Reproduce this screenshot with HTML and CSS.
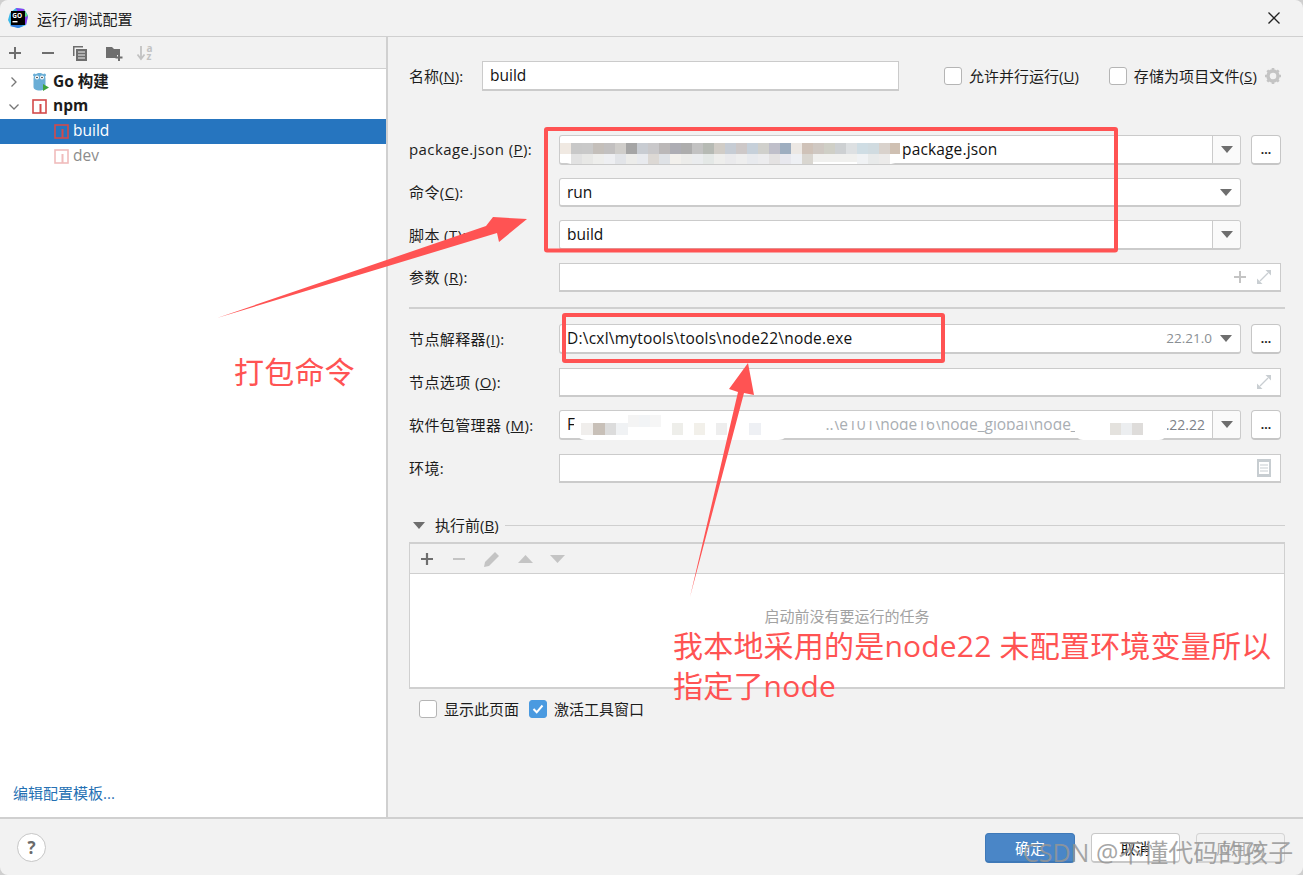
FILE: index.html
```html
<!DOCTYPE html>
<html lang="zh">
<head>
<meta charset="utf-8">
<title>运行/调试配置</title>
<link rel="stylesheet" href="styles.css">
</head>
<body>
<div class="window">
  <header class="titlebar">
    <svg class="app-logo" width="22" height="22" viewBox="0 0 22 22">
      <path d="M3 6 9 1l8 1 4 7-2 9-7 3-8-2-3-6z" fill="#3bb8e8"/>
      <path d="M9 1l8 1 4 7-2 9-5-6z" fill="#8a3ff0"/>
      <path d="M17 2l4 7-3 1z" fill="#5fe08a"/>
      <path d="M3 19l8 2 5-2-6-4z" fill="#2f7de0"/>
      <rect x="4" y="4" width="14" height="14" fill="#000"/>
      <text x="5.2" y="10.5" class="logo-text">GO</text>
      <rect x="5.5" y="14" width="5" height="1.4" fill="#fff"/>
    </svg>
    <span class="title-text">运行/调试配置</span>
    <svg class="close-icon" width="14" height="14" viewBox="0 0 14 14"><path d="M1.5 1.5l11 11M12.5 1.5l-11 11" stroke="#222" stroke-width="1.3" fill="none"/></svg>
  </header>
  <div class="main">
    <aside class="sidebar">
      <div class="side-toolbar">
        <svg width="14" height="14" viewBox="0 0 14 14" class="tool-plus"><path d="M7 1v12M1 7h12" stroke="#6e6e6e" stroke-width="2"/></svg>
        <svg width="14" height="14" viewBox="0 0 14 14" class="tool-minus"><path d="M1 7h12" stroke="#6e6e6e" stroke-width="2"/></svg>
        <svg width="16" height="16" viewBox="0 0 16 16" class="tool-copy"><path d="M1 11V1h10v1.500H2.500V11z" fill="#6e6e6e"/><rect x="4" y="4" width="11" height="12" fill="#6e6e6e"/><path d="M6 7h7M6 10h7M6 13h7" stroke="#f2f2f2" stroke-width="1.200"/></svg>
        <svg width="18" height="16" viewBox="0 0 18 16" class="tool-folder"><path d="M1 2h6l2 2h6v6h-3v3H1z" fill="#6e6e6e"/><path d="M14 9v7M10.500 12.500h7" stroke="#6e6e6e" stroke-width="2"/></svg>
        <svg width="20" height="25" viewBox="0 -4 20 25" class="tool-sort"><path d="M5 2v12M1.500 10.500 5 15l3.500-4.500" stroke="#c2c2c2" stroke-width="1.800" fill="none"/><text x="10.500" y="7.500" class="sort-text">a</text><text x="10.500" y="16" class="sort-text">z</text></svg>
      </div>
      <div class="tree">
        <div class="tree-row">
          <svg class="chev" width="10" height="12" viewBox="0 0 10 12"><path d="M2.500 1.500 7 6l-4.500 4.500" stroke="#777" stroke-width="1.300" fill="none"/></svg>
          <svg class="node-icon" width="17" height="20" viewBox="0 0 17 20">
            <circle cx="2.500" cy="3" r="1.500" fill="#6aaed6"/><circle cx="12.500" cy="3" r="1.500" fill="#6aaed6"/>
            <path d="M1.500 7c0-3.500 2.500-6 6-6s6 2.500 6 6v8c0 2-2.500 3.500-6 3.500s-6-1.500-6-3.500z" fill="#6aaed6"/>
            <circle cx="5" cy="5.500" r="2" fill="#fff"/><circle cx="10" cy="5.500" r="2" fill="#fff"/>
            <circle cx="5" cy="5.500" r=".8" fill="#222"/><circle cx="10" cy="5.500" r=".8" fill="#222"/>
            <path d="M11 12l6 3.500-6 3.500z" fill="#3fa33f"/>
          </svg>
          <span class="bold">Go 构建</span>
        </div>
        <div class="tree-row">
          <svg class="chev" width="12" height="10" viewBox="0 0 12 10"><path d="M1.500 2.500 6 7l4.500-4.500" stroke="#777" stroke-width="1.300" fill="none"/></svg>
          <svg class="node-icon npm" width="15" height="15" viewBox="0 0 15 15"><rect x="1" y="1" width="13" height="13" fill="#fff" stroke="#d44a4a" stroke-width="1.600"/><rect x="7.500" y="5" width="2" height="9" fill="#d44a4a"/></svg>
          <span class="bold">npm</span>
        </div>
        <div class="tree-row leaf selected">
          <svg class="node-icon npm" width="15" height="15" viewBox="0 0 15 15"><rect x="1" y="1" width="13" height="13" fill="none" stroke="#d44a4a" stroke-width="1.600"/><rect x="7.500" y="5" width="2" height="9" fill="#d44a4a"/></svg>
          <span>build</span>
        </div>
        <div class="tree-row leaf muted">
          <svg class="node-icon npm" width="15" height="15" viewBox="0 0 15 15"><rect x="1" y="1" width="13" height="13" fill="#fff" stroke="#f0bcbc" stroke-width="1.600"/><rect x="7.500" y="5" width="2" height="9" fill="#f0bcbc"/></svg>
          <span>dev</span>
        </div>
        <a class="edit-link">编辑配置模板...</a>
      </div>
    </aside>
    <section class="content">
      <div class="name-row">
        <label class="name-label">名称(<u>N</u>):</label>
        <div class="field name-field">build</div>
        <span class="check first-check"></span><span class="check-label">允许并行运行(<u>U</u>)</span>
        <span class="check second-check"></span><span class="check-label wide-label">存储为项目文件(<u>S</u>)</span>
        <svg class="gear" width="18" height="18" viewBox="0 0 18 18"><circle cx="9" cy="9" r="5" fill="none" stroke="#c4c4c4" stroke-width="3.400"/><path d="M9 1v3M9 14v3M1 9h3M14 9h3M3.300 3.300l2.200 2.200M12.500 12.500l2.200 2.200M14.700 3.300l-2.200 2.200M5.500 12.500l-2.200 2.200" stroke="#c4c4c4" stroke-width="2.600"/></svg>
      </div>

      <div class="form-group">
        <div class="row h30">
          <label class="row-label">package.json (<u>P</u>):</label>
          <div class="field round combo"><span class="value pkg-value">package.json</span><span class="drop sep"><i class="tri"></i></span></div>
          <button class="more">...</button>
        </div>
        <div class="row h29">
          <label class="row-label">命令(<u>C</u>):</label>
          <div class="field round combo"><span class="value">run</span><span class="drop"><i class="tri"></i></span></div>
        </div>
        <div class="row h30">
          <label class="row-label">脚本 (<u>T</u>):</label>
          <div class="field round combo"><span class="value">build</span><span class="drop sep"><i class="tri"></i></span></div>
        </div>
        <div class="row h29">
          <label class="row-label">参数 (<u>R</u>):</label>
          <div class="field wide"><span class="value"></span>
            <svg class="field-plus" width="14" height="14" viewBox="0 0 14 14"><path d="M7 1v12M1 7h12" stroke="#c4c4c4" stroke-width="2"/></svg>
            <svg class="expand" width="16" height="16" viewBox="0 0 16 16"><path d="M9.500 1H15v5.500zM6.500 15H1V9.500z" fill="#c9ced2"/><path d="M12 4 4 12" stroke="#c9ced2" stroke-width="1.200"/></svg>
          </div>
        </div>
      </div>

      <div class="divider"></div>

      <div class="form-group">
        <div class="row h30 extra-gap">
          <label class="row-label">节点解释器(<u>I</u>):</label>
          <div class="field round combo"><span class="value node-path">D:\cxl\mytools\tools\node22\node.exe</span><span class="version">22.21.0</span><span class="drop"><i class="tri"></i></span></div>
          <button class="more">...</button>
        </div>
        <div class="row h29">
          <label class="row-label">节点选项 (<u>O</u>):</label>
          <div class="field wide"><span class="value"></span>
            <svg class="expand" width="16" height="16" viewBox="0 0 16 16"><path d="M9.500 1H15v5.500zM6.500 15H1V9.500z" fill="#c9ced2"/><path d="M12 4 4 12" stroke="#c9ced2" stroke-width="1.200"/></svg>
          </div>
        </div>
        <div class="row h30 extra-gap">
          <label class="row-label">软件包管理器 (<u>M</u>):</label>
          <div class="field round combo"><span class="value">F</span><span class="faint-path">..\e101\node16\node_global\node_</span><span class="version dark">.22.22</span><span class="drop sep"><i class="tri"></i></span></div>
          <button class="more">...</button>
        </div>
        <div class="row h29">
          <label class="row-label">环境:</label>
          <div class="field wide"><span class="value"></span>
            <svg class="doc" width="14" height="18" viewBox="0 0 14 18"><rect width="14" height="18" fill="#c7cdd1"/><rect x="2" y="3" width="10" height="12" fill="#fff"/><path d="M3 6h8M3 9h8M3 12h8" stroke="#c7cdd1" stroke-width="1.200"/></svg>
          </div>
        </div>
      </div>

      <div class="before-head">
        <i class="tri before-tri"></i>
        <span class="before-title">执行前(<u>B</u>)</span>
        <span class="before-line"></span>
      </div>
      <div class="before-box">
        <div class="before-tools">
          <svg width="14" height="14" viewBox="0 0 14 14"><path d="M7 1v12M1 7h12" stroke="#6e6e6e" stroke-width="2.200"/></svg>
          <svg width="14" height="14" viewBox="0 0 14 14"><path d="M1 7h12" stroke="#c4c4c4" stroke-width="2"/></svg>
          <svg width="18" height="18" viewBox="0 0 18 18"><path d="M1 17l1-5L12 2l4 4L6 16z" fill="#c4c4c4"/></svg>
          <svg width="15" height="8" viewBox="0 0 15 8"><path d="M0 8 7.500 0 15 8z" fill="#c4c4c4"/></svg>
          <svg width="15" height="8" viewBox="0 0 15 8"><path d="M0 0l7.500 8L15 0z" fill="#c4c4c4"/></svg>
        </div>
        <div class="before-empty">启动前没有要运行的任务</div>
      </div>
      <div class="bottom-checks">
        <span class="check"></span><span class="check-label">显示此页面</span>
        <span class="check checked"><svg width="18" height="18" viewBox="0 0 18 18"><path d="M4.500 9l3.200 3.300L13.500 5.500" stroke="#fff" stroke-width="2" fill="none"/></svg></span><span class="check-label">激活工具窗口</span>
      </div>
    </section>
  </div>
  <footer class="footer">
    <span class="help">?</span>
    <div class="actions">
      <button class="btn primary">确定</button>
      <button class="btn">取消</button>
      <button class="btn disabled">应用(A)</button>
    </div>
  </footer>

  <svg class="annotations" width="1303" height="875" viewBox="0 0 1303 875">
    <g>
      <rect x="561" y="136" width="340" height="28" rx="10" fill="#fff"/>
      <rect x="574" y="411" width="216" height="29" rx="12" fill="#fff"/>
      <rect x="780" y="411" width="390" height="10" fill="#fff"/>
      <rect x="1075" y="411" width="92" height="29" rx="8" fill="#fff"/>
    </g>
    <g>
      <rect x="560" y="143" width="11" height="11" fill="#f0e9e2"/><rect x="571" y="143" width="11" height="11" fill="#c8c8c8"/><rect x="582" y="143" width="11" height="11" fill="#c9c9c9"/><rect x="593" y="143" width="11" height="11" fill="#c4bfba"/><rect x="604" y="143" width="11" height="11" fill="#c2c0c0"/><rect x="615" y="143" width="11" height="11" fill="#cfcdca"/><rect x="626" y="143" width="11" height="11" fill="#a5a5a5"/><rect x="637" y="143" width="11" height="11" fill="#c8ccd2"/><rect x="648" y="143" width="11" height="11" fill="#c9c8ca"/><rect x="659" y="143" width="11" height="11" fill="#bbb8b8"/><rect x="670" y="143" width="11" height="11" fill="#adadb4"/><rect x="681" y="143" width="11" height="11" fill="#adadad"/><rect x="692" y="143" width="11" height="11" fill="#c2c2c2"/><rect x="703" y="143" width="11" height="11" fill="#b6bab4"/><rect x="714" y="143" width="11" height="11" fill="#d0ccc6"/><rect x="725" y="143" width="11" height="11" fill="#c6ccd4"/><rect x="736" y="143" width="11" height="11" fill="#cdc8c8"/><rect x="747" y="143" width="11" height="11" fill="#c6d0da"/><rect x="758" y="143" width="11" height="11" fill="#d0d0cc"/><rect x="769" y="143" width="11" height="11" fill="#bfbfca"/><rect x="780" y="143" width="11" height="11" fill="#9eaec0"/><rect x="791" y="143" width="11" height="11" fill="#ece8e4"/><rect x="802" y="143" width="11" height="11" fill="#cfc2b8"/><rect x="813" y="143" width="11" height="11" fill="#cfc8c2"/><rect x="824" y="143" width="11" height="11" fill="#cfcfc6"/><rect x="835" y="143" width="11" height="11" fill="#cdd0d2"/><rect x="846" y="143" width="11" height="11" fill="#dde0e2"/><rect x="857" y="143" width="11" height="11" fill="#cfdde4"/><rect x="868" y="143" width="11" height="11" fill="#d0dbe0"/><rect x="879" y="143" width="11" height="11" fill="#d9d2cc"/><rect x="890" y="143" width="10" height="11" fill="#cfc0b2"/>
      <rect x="571" y="154" width="11" height="10" fill="#e2e2e2"/><rect x="582" y="154" width="11" height="10" fill="#e8e8e6"/><rect x="593" y="154" width="11" height="10" fill="#eeeeec"/><rect x="604" y="154" width="11" height="10" fill="#eeeff2"/><rect x="615" y="154" width="11" height="10" fill="#e2e4e8"/><rect x="626" y="154" width="11" height="10" fill="#ececea"/><rect x="637" y="154" width="11" height="10" fill="#e8eaee"/><rect x="648" y="154" width="11" height="10" fill="#dcd8d4"/><rect x="659" y="154" width="11" height="10" fill="#dfe2e6"/><rect x="670" y="154" width="11" height="10" fill="#f2f0ec"/><rect x="681" y="154" width="11" height="10" fill="#ececea"/><rect x="692" y="154" width="11" height="10" fill="#eaecee"/><rect x="703" y="154" width="11" height="10" fill="#e4e8e6"/><rect x="714" y="154" width="11" height="10" fill="#eeeeec"/><rect x="725" y="154" width="11" height="10" fill="#eaeaec"/><rect x="736" y="154" width="11" height="10" fill="#eeeeee"/><rect x="747" y="154" width="11" height="10" fill="#e8eaee"/><rect x="758" y="154" width="11" height="10" fill="#ececee"/><rect x="769" y="154" width="11" height="10" fill="#e4e2e2"/><rect x="780" y="154" width="11" height="10" fill="#e8e8ee"/><rect x="791" y="154" width="11" height="10" fill="#eef0f4"/><rect x="802" y="154" width="11" height="10" fill="#d9d6d0"/><rect x="813" y="154" width="44" height="8" fill="#f0f0ee"/><rect x="857" y="154" width="11" height="10" fill="#f0f2f4"/><rect x="868" y="154" width="11" height="10" fill="#e8eaea"/><rect x="879" y="154" width="11" height="10" fill="#ecebea"/>
    </g>
    <g>
      <rect x="581" y="423" width="12" height="12" fill="#f0eeec"/><rect x="593" y="423" width="12" height="12" fill="#c8c0b8"/><rect x="605" y="423" width="11" height="12" fill="#dcdcdc"/><rect x="616" y="423" width="12" height="12" fill="#f0f2f4"/><rect x="628" y="415" width="11" height="12" fill="#f4f4f4"/><rect x="639" y="415" width="11" height="12" fill="#f2f4f6"/><rect x="650" y="415" width="11" height="12" fill="#f6f6f6"/><rect x="672" y="423" width="11" height="12" fill="#eeeeea"/><rect x="694" y="423" width="11" height="12" fill="#f2f0ea"/><rect x="716" y="423" width="11" height="12" fill="#eeeeee"/><rect x="749" y="423" width="12" height="12" fill="#eef0f4"/><rect x="1110" y="423" width="11" height="12" fill="#e4e2de"/><rect x="1121" y="423" width="11" height="12" fill="#eceef0"/><rect x="1132" y="423" width="11" height="12" fill="#dedcda"/>
    </g>
    <rect class="callout" x="546" y="129" width="570" height="121.500" rx="1"/>
    <rect class="callout" x="564" y="315" width="379" height="46" rx="1"/>
    <polygon class="arrow" points="217,318 486,226 493,217 527,219 499,242 497,233"/>
    <polygon class="arrow" points="690,597 738,392 729,389 748,363 754,395 744,393"/>
  </svg>
  <div class="note note-pack">打包命令</div>
  <div class="note note-node">我本地采用的是node22 未配置环境变量所以<br>指定了node</div>
  <div class="watermark">CSDN @不懂代码的孩子</div>
</div>
</body>
</html>
```
FILE: styles.css
```css
* { box-sizing: border-box; }
html, body { margin: 0; padding: 0; }
body {
  width: 1303px;
  height: 875px;
  overflow: hidden;
  background: #cfcfcf;
  font-family: "Open Sans", "Noto Sans CJK SC", sans-serif;
  font-size: 15px;
  color: #1c1c1c;
}
.window {
  position: relative;
  width: 1303px;
  height: 875px;
  display: flex;
  flex-direction: column;
  background: #f2f2f2;
  border-radius: 8px;
}
.titlebar {
  height: 37px;
  flex: none;
  display: flex;
  align-items: center;
  padding: 0 22px 0 7px;
  border-bottom: 1px solid #d0d0d0;
}
.app-logo { flex: none; }
.logo-text { font: 700 6.500px "Open Sans", sans-serif; fill: #fff; }
.title-text { margin-left: 8px; font-size: 15px; }
.close-icon { margin-left: auto; }
.main { flex: 1; display: flex; min-height: 0; }
.sidebar {
  width: 388px;
  flex: none;
  display: flex;
  flex-direction: column;
  border-right: 2px solid #d0d0d0;
}
.side-toolbar {
  height: 32px;
  flex: none;
  display: flex;
  align-items: center;
  padding-left: 8px;
  border-bottom: 1px solid #d0d0d0;
}
.tool-minus { margin-left: 19px; }
.tool-copy { margin-left: 17px; }
.tool-folder { margin-left: 17px; }
.tool-sort { margin-left: 13px; }
.sort-text { font: 700 10px "Open Sans", sans-serif; fill: #c2c2c2; }
.tree {
  flex: 1;
  background: #fff;
  display: flex;
  flex-direction: column;
  position: relative;
}
.tree-row {
  height: 25px;
  flex: none;
  display: flex;
  align-items: center;
  padding-left: 8px;
  font-size: 15.500px;
}
.chev { width: 12px; flex: none; }
.node-icon { margin-left: 12px; flex: none; }
.node-icon.npm { margin-left: 12px; margin-right: 2px; }
.tree-row > span { margin-left: 4px; padding-bottom: 3px; }
.bold { font-weight: 700; }
.leaf { padding-left: 43px; }
.leaf .node-icon.npm { margin-left: 11px; margin-right: 0; }
.selected { background: #2675bf; color: #fff; }
.muted { color: #8c8c8c; }
.edit-link {
  margin-top: auto;
  margin-bottom: 14px;
  margin-left: 13px;
  color: #2470b3;
  font-size: 15px;
}
.content { flex: 1; padding: 24px 18px 0 21px; min-width: 0; }
.name-row { height: 30px; display: flex; align-items: center; }
.name-label { width: 73px; flex: none; padding-bottom: 2px; }
.name-field { width: 417px; height: 30px; flex: none; padding-bottom: 1px; }
.field {
  display: flex;
  align-items: center;
  background: #fff;
  border: 1px solid #cbcbcb;
  border-bottom-width: 2px;
  padding-left: 7px;
  font-size: 15.500px;
  color: #111;
}
.h30 .field { padding-bottom: 1px; }
.first-check { margin-left: 45px; }
.second-check { margin-left: 30px; }
.check {
  width: 18px;
  height: 18px;
  flex: none;
  display: inline-block;
  background: #fff;
  border: 1px solid #b5b5b5;
  border-radius: 3px;
}
.check-label { margin-left: 7px; flex: none; padding-bottom: 1px; }
.wide-label { letter-spacing: .1px; }
.gear { margin-left: 7px; flex: none; }
.form-group { margin-top: 44px; display: flex; flex-direction: column; gap: 13px; }
.divider + .form-group { margin-top: 15px; }
.row { display: flex; align-items: stretch; }
.h30 { height: 30px; }
.h29 { height: 29px; }
.extra-gap { margin-bottom: 1px; }
.row-label { width: 150px; flex: none; align-self: center; padding-bottom: 2px; letter-spacing: .4px; white-space: nowrap; }
.round { border-radius: 3px; }
.combo { width: 682px; flex: none; padding-right: 0; }
.wide { width: 722px; flex: none; padding-right: 8px; }
.value { flex: 1; min-width: 0; white-space: nowrap; }
.pkg-value { padding-left: 335px; letter-spacing: .15px; }
.node-path { letter-spacing: .22px; }
.drop {
  width: 28px;
  align-self: stretch;
  flex: none;
  display: flex;
  align-items: center;
  justify-content: center;
  background: #fafafa;
  border-radius: 0 3px 3px 0;
}
.h30 .drop { margin-bottom: -1px; }
.combo > .drop:not(.sep) { background: transparent; }
.sep { border-left: 1px solid #cbcbcb; }
.tri {
  width: 0;
  height: 0;
  display: block;
  border-left: 6px solid transparent;
  border-right: 6px solid transparent;
  border-top: 7px solid #6e6e6e;
}
.version { color: #8a8f94; font-size: 13.500px; }
.version.dark { margin-right: 7px; color: #7d8288; font-size: 14px; }
.faint-path { color: #a9aeb3; font-size: 15.500px; white-space: nowrap; margin-right: 88px; }
.more {
  width: 30px;
  margin-left: 10px;
  flex: none;
  background: #fff;
  border: 1px solid #c6c6c6;
  border-bottom-width: 2px;
  border-radius: 4px;
  padding: 0;
  font: 700 12px "Open Sans", sans-serif;
  color: #222;
}
.field-plus { margin-right: 9px; flex: none; }
.expand { flex: none; }
.doc { flex: none; margin-right: 1px; }
.divider { height: 2px; margin-top: 15px; background: #d0d0d0; }
.before-head {
  height: 20px;
  margin-top: 32px;
  display: flex;
  align-items: center;
}
.before-tri { margin-left: 4px; }
.before-title { margin-left: 10px; flex: none; padding-bottom: 1px; }
.before-line { flex: 1; height: 1px; margin-left: 6px; background: #cfcfcf; }
.before-box {
  height: 147px;
  margin-top: 7px;
  border: 1px solid #d0d0d0;
  border-width: 2px 1px 2px 1px;
  background: #fff;
  display: flex;
  flex-direction: column;
}
.before-tools {
  height: 30px;
  flex: none;
  display: flex;
  align-items: center;
  gap: 17px;
  padding-left: 10px;
  background: #f2f2f2;
  border-bottom: 1px solid #cfcfcf;
}
.before-tools svg:nth-child(2) { margin-left: 1px; }
.before-empty {
  margin-top: 31px;
  text-align: center;
  font-size: 15px;
  color: #a2a2a2;
}
.bottom-checks {
  margin-top: 11px;
  padding-left: 10px;
  height: 18px;
  display: flex;
  align-items: center;
}
.checked {
  margin-left: 10px;
  background: #4a9ae0;
  border-color: #4a9ae0;
}
.checked svg { display: block; margin: -1px; }
.footer {
  height: 58px;
  flex: none;
  display: flex;
  align-items: center;
  justify-content: space-between;
  padding: 0 18px 0 17px;
  border-top: 2px solid #d0d0d0;
}
.help {
  width: 29px;
  height: 29px;
  display: flex;
  align-items: center;
  justify-content: center;
  background: #fff;
  border: 1px solid #c6c6c6;
  border-radius: 50%;
  font: 700 17px "Open Sans", sans-serif;
  color: #6a6a6a;
}
.actions { display: flex; gap: 16px; padding-top: 1px; }
.btn {
  width: 89px;
  height: 30px;
  padding: 0;
  background: #fff;
  border: 1px solid #c8c8c8;
  border-bottom-width: 2px;
  border-radius: 4px;
  font-family: "Open Sans", "Noto Sans CJK SC", sans-serif;
  font-size: 15px;
  color: #111;
}
.primary { width: 90px; background: #4a86c7; border-color: #3f79b8; color: #fff; }
.disabled { background: #f2f2f2; color: #a8a8a8; border-color: #d4d4d4; }
.annotations { position: absolute; left: 0; top: 0; pointer-events: none; }
.callout { fill: none; stroke: #ff5353; stroke-width: 4; }
.arrow { fill: #ff5353; }
.note {
  position: absolute;
  color: #ff5353;
  font-size: 30px;
  line-height: 40px;
  letter-spacing: .2px;
  white-space: nowrap;
}
.note-pack { left: 234px; top: 352px; }
.note-node { left: 673px; top: 626px; }
.watermark {
  position: absolute;
  left: 1023px;
  top: 836px;
  font-size: 25px;
  line-height: 32px;
  white-space: nowrap;
  color: rgba(150, 150, 150, 0.85);
}
```
